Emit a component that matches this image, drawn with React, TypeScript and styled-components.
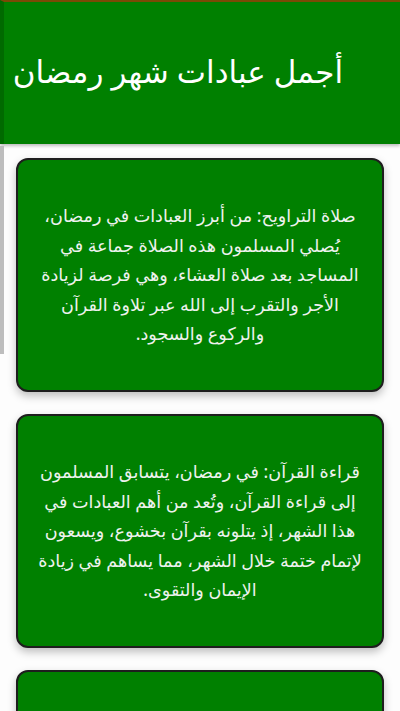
import React from 'react'
import styled, { createGlobalStyle } from 'styled-components'

const GlobalStyle = createGlobalStyle`
  html, body {
    margin: 0;
    padding: 0;
    background: #fdfdfd;
  }
  body {
    font-family: "Noto Sans", "DejaVu Sans", sans-serif;
    direction: rtl;
  }
`

const items = [
  'صلاة التراويح: من أبرز العبادات في رمضان، يُصلي المسلمون هذه الصلاة جماعة في المساجد بعد صلاة العشاء، وهي فرصة لزيادة الأجر والتقرب إلى الله عبر تلاوة القرآن والركوع والسجود.',
  'قراءة القرآن: في رمضان، يتسابق المسلمون إلى قراءة القرآن، وتُعد من أهم العبادات في هذا الشهر، إذ يتلونه بقرآن بخشوع، ويسعون لإتمام ختمة خلال الشهر، مما يساهم في زيادة الإيمان والتقوى.',
  'الصدقة: يحرص المسلمون في رمضان على إخراج الصدقات ومساعدة الفقراء والمحتاجين، فهي من أعظم القربات إلى الله، وتضاعف أجرها في هذا الشهر الكريم، وتزيد من التكافل والمحبة بين الناس.',
]

const App = () => {
  return (
    <Page>
      <GlobalStyle />
      <Header>
        <Title>أجمل عبادات شهر رمضان</Title>
      </Header>
      <List>
        {items.map((text, i) => (
          <Card key={i}>
            <CardText>{text}</CardText>
          </Card>
        ))}
      </List>
      <ScrollThumb />
    </Page>
  )
}

const Page = styled.div`
  position: relative;
  min-height: 711px;
`

const Header = styled.header`
  height: 144px;
  background: #008000;
  border-top: 2px solid #7a4a05;
  box-sizing: border-box;
  display: flex;
  align-items: center;
  padding: 0 57px 4px 10px;
  box-shadow: 0 2px 3px rgba(0, 0, 0, 0.25);
  border-left: 4px solid #006a00;
`

const Title = styled.h1`
  margin: 0;
  color: #ffffff;
  font-size: 31px;
  font-weight: 500;
  white-space: nowrap;
`

const List = styled.main`
  display: flex;
  flex-direction: column;
  gap: 22px;
  padding: 14px 16px 0;
`

const Card = styled.section`
  height: 234px;
  box-sizing: border-box;
  background: #008000;
  border: 2px solid #1e1e1e;
  border-radius: 12px;
  box-shadow: 0 4px 8px rgba(0, 0, 0, 0.25);
  display: flex;
  align-items: center;
  justify-content: center;
  padding: 0 18px;
`

const CardText = styled.p`
  margin: 0;
  color: #eef2ee;
  font-size: 17.6px;
  line-height: 29.5px;
  text-align: center;
`

const ScrollThumb = styled.div`
  position: absolute;
  left: 0;
  top: 146px;
  width: 4px;
  height: 208px;
  background: #bdbdbd;
`

export default App
